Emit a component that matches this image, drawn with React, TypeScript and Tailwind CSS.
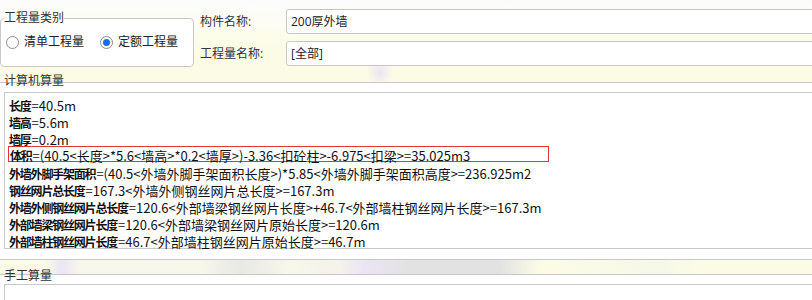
import React from "react";

const lines: [string, string][] = [
  ["长度", "=40.5m"],
  ["墙高", "=5.6m"],
  ["墙厚", "=0.2m"],
  ["体积", "=(40.5<长度>*5.6<墙高>*0.2<墙厚>)-3.36<扣砼柱>-6.975<扣梁>=35.025m3"],
  ["外墙外脚手架面积", "=(40.5<外墙外脚手架面积长度>)*5.85<外墙外脚手架面积高度>=236.925m2"],
  ["钢丝网片总长度", "=167.3<外墙外侧钢丝网片总长度>=167.3m"],
  ["外墙外侧钢丝网片总长度", "=120.6<外部墙梁钢丝网片长度>+46.7<外部墙柱钢丝网片长度>=167.3m"],
  ["外部墙梁钢丝网片长度", "=120.6<外部墙梁钢丝网片原始长度>=120.6m"],
  ["外部墙柱钢丝网片长度", "=46.7<外部墙柱钢丝网片原始长度>=46.7m"],
];

function Radio({ label, checked }: { label: string; checked?: boolean }) {
  return (
    <div className="flex items-center gap-[5px]">
      <span className="w-[13px] h-[13px] rounded-full border border-[#8c8c8c] bg-white flex items-center justify-center">
        {checked && <span className="w-[7px] h-[7px] rounded-full bg-[#1a6fdc]"></span>}
      </span>
      <span className="text-[#222] leading-[14px]">{label}</span>
    </div>
  );
}

function Field({ label, value }: { label: string; value: string }) {
  return (
    <div className="flex items-center">
      <div className="w-[86px] text-[#333] leading-[14px]">{label}</div>
      <div className="flex-1 h-[25px] border border-[#c6c6c6] rounded-[3px] bg-white pl-[4px] flex items-center text-[#222]">
        {value}
      </div>
    </div>
  );
}

function CalcLine({ k, v }: { k: string; v: string }) {
  return (
    <>
      <span className="font-bold text-[12px] tracking-[-1.2px] leading-[17px] pr-[1px]">{k}</span>
      <span className="leading-[17px]">{v}</span>
    </>
  );
}

export default function App() {
  return (
    <div className="w-[812px] h-[300px] overflow-hidden bg-white text-[12px] font-['Open_Sans','Noto_Sans_CJK_SC',sans-serif]">
      {/* top panel */}
      <div className="h-[83px] border-b border-[#c8c8c8] flex bg-[radial-gradient(ellipse_14px_16px_at_380px_72px,#ebe5f3,transparent),linear-gradient(180deg,#fbfbfb_0px,#fdfdf3_25px,#fcfce6_45px,#fcfce6_83px)]">
        <fieldset className="mt-[11px] h-[56px] w-[194px] border border-[#c8c8c8] rounded-[4px] bg-white pl-[3px]">
          <legend className="px-0 leading-[14px] text-[#333]">工程量类别</legend>
          <div className="flex items-center gap-[16px] pt-[10px] pl-[2px]">
            <Radio label="清单工程量" />
            <Radio label="定额工程量" checked />
          </div>
        </fieldset>
        <div className="ml-[6px] flex-1 -mr-[10px] flex flex-col gap-[7px] pt-[9px]">
          <Field label="构件名称:" value="200厚外墙" />
          <Field label="工程量名称:" value="[全部]" />
        </div>
      </div>

      {/* computer calc */}
      <div className="-mt-[9px] pl-[4px] leading-[14px] text-[#333]">计算机算量</div>
      <div className="mt-[4px] ml-[4px] h-[157px] border border-r-0 border-[#c8c8c8] bg-white pt-[4px] pl-[4px] text-[13px] text-[#111] font-['Noto_Sans_CJK_SC',sans-serif]">
        {lines.map(([k, v]) =>
          k === "体积" ? (
            <div key={k} className="h-[16px] -mt-[2px] mb-[3px] w-[541px] -ml-[1px] pl-[1px] border border-[#e0383a] flex items-baseline whitespace-nowrap">
              <CalcLine k={k} v={v} />
            </div>
          ) : (
            <div key={k} className="h-[17px] flex items-baseline whitespace-nowrap">
              <CalcLine k={k} v={v} />
            </div>
          )
        )}
      </div>

      {/* manual calc */}
      <div className="mt-[10px] h-[16px] border-y border-[#c8c8c8] bg-[linear-gradient(90deg,#fcfce6_0px,#fcfce6_45px,#ebe4f4_62px,#f8f7ec_80px,#f7f7ea_200px,#e8e8e6_240px,#f7f7ea_290px,#f4f2ea_340px,#ebe4f4_365px,#e2e2e2_410px,#e2e2e2_500px,#fcfce6_540px,#f6f8e8_660px,#fcfce6_700px,#fcfce6_812px)]"></div>
      <div className="-mt-[6px] pl-[4px] leading-[14px] text-[#333]">手工算量</div>
      <div className="mt-[1px] ml-[4px] h-[40px] border border-r-0 border-[#c8c8c8] bg-white"></div>
    </div>
  );
}
